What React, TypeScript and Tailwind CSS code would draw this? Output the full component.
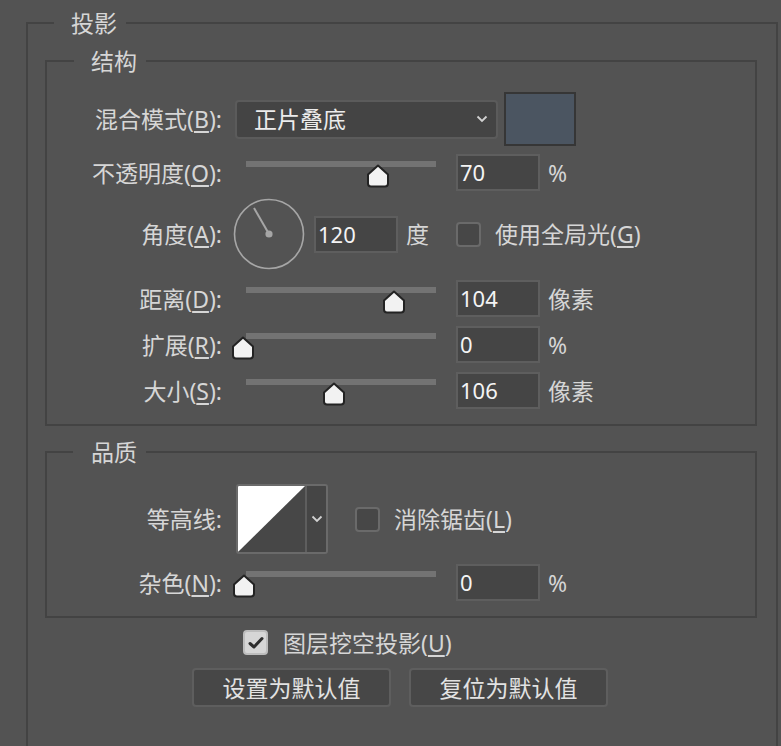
import React from 'react';

const LABEL = 'w-[175px] shrink-0 text-right';

function Mn({ k }: { k: string }) {
  return (
    <>
      (<span className="underline decoration-[1.5px] underline-offset-[3px]">{k}</span>)
    </>
  );
}

function Thumb({ left }: { left: number }) {
  return (
    <svg className="absolute top-[10px]" style={{ left: left - 12 }} width="24" height="24" viewBox="0 0 24 24">
      <path
        d="M12 1.5 L22 10.5 V19.5 Q22 22.5 19 22.5 H5 Q2 22.5 2 19.5 V10.5 Z"
        fill="#f2f2f2"
        stroke="#232323"
        strokeWidth="2"
        strokeLinejoin="round"
      />
    </svg>
  );
}

function Slider({ pos }: { pos: number }) {
  return (
    <div className="relative ml-[24px] h-full w-[190px] shrink-0">
      <div className="absolute inset-x-0 top-[7px] h-[6px] bg-[#737373]" />
      <Thumb left={pos} />
    </div>
  );
}

function NumField({ value, className = '' }: { value: string; className?: string }) {
  return (
    <div
      className={`h-full w-[84px] shrink-0 border-2 border-[#5e5e5e] bg-[#454545] px-[2px] text-[22px] leading-[33px] text-[#f4f4f4] ${className}`}
    >
      {value}
    </div>
  );
}

function SliderRow({ label, pos, value, unit }: { label: React.ReactNode; pos: number; value: string; unit: string }) {
  return (
    <div className="flex h-[37px] items-center">
      <div className={LABEL}>{label}</div>
      <Slider pos={pos} />
      <NumField value={value} className="ml-[20px]" />
      <span className="ml-[8px]">{unit}</span>
    </div>
  );
}

function CheckBox({ checked = false }: { checked?: boolean }) {
  if (checked) {
    return (
      <div className="flex h-[25px] w-[25px] shrink-0 items-center justify-center rounded-[4px] border-2 border-[#bdbdbd] bg-[#d6d6d6]">
        <svg width="16" height="14" viewBox="0 0 16 14">
          <path d="M2 7.5 L6 11 L14 2.5" fill="none" stroke="#2e2e2e" strokeWidth="3" strokeLinecap="round" strokeLinejoin="round" />
        </svg>
      </div>
    );
  }
  return <div className="h-[25px] w-[25px] shrink-0 rounded-[4px] border-2 border-[#6a6a6a] bg-[#474747]" />;
}

function Chevron() {
  return (
    <svg width="12" height="8" viewBox="0 0 12 8">
      <path d="M1.5 1.5 L6 6 L10.5 1.5" fill="none" stroke="#d2d2d2" strokeWidth="1.8" />
    </svg>
  );
}

export default function App() {
  return (
    <div className="h-[746px] w-[781px] overflow-hidden bg-[#535353] pt-[8px] font-['Noto_Sans','Noto_Sans_CJK_SC',sans-serif] text-[23px] leading-[30px] text-[#d6d6d6]">
      <fieldset className="ml-[26px] w-[752px] border-2 border-[#434343] pb-[80px]">
        <legend className="ml-[26px] pl-[17px] pr-[9px] leading-[30px]">投影</legend>

        {/* 结构 */}
        <fieldset className="ml-[17px] mt-[8px] w-[712px] border-2 border-[#434343] pb-[15px]">
          <legend className="ml-[27px] pl-[17px] pr-[9px] leading-[30px]">结构</legend>

          <div className="mt-[16px] flex h-[54px] items-center">
            <div className={LABEL}>
              混合模式<Mn k="B" />:
            </div>
            <div className="ml-[13px] flex h-[39px] w-[263px] items-center justify-between rounded-[4px] border-2 border-[#5b5b5b] bg-[#444444] pl-[17px] pr-[8px] text-[#ececec]">
              <span>正片叠底</span>
              <Chevron />
            </div>
            <div className="ml-[6px] h-[54px] w-[72px] border-2 border-[#363636] bg-[#4b5561]" />
          </div>

          <div className="mt-[8px]">
            <SliderRow label={<>不透明度<Mn k="O" />:</>} pos={132} value="70" unit="%" />
          </div>

          <div className="mt-[7px] flex h-[72px] items-center">
            <div className={LABEL}>
              角度<Mn k="A" />:
            </div>
            <svg className="ml-[11px] shrink-0" width="72" height="72" viewBox="0 0 72 72">
              <circle cx="36" cy="36" r="34.5" fill="none" stroke="#a6a6a6" strokeWidth="1.6" />
              <line x1="36" y1="36" x2="21" y2="10" stroke="#a6a6a6" strokeWidth="2" />
              <circle cx="36" cy="36" r="3.6" fill="#a6a6a6" />
            </svg>
            <div className="ml-[9px] h-[37px]">
              <NumField value="120" className="w-[83px]" />
            </div>
            <span className="ml-[8px] w-[50px] shrink-0">度</span>
            <CheckBox />
            <span className="ml-[14px]">
              使用全局光<Mn k="G" />
            </span>
          </div>

          <div className="mt-[10px]">
            <SliderRow label={<>距离<Mn k="D" />:</>} pos={148} value="104" unit="像素" />
          </div>
          <div className="mt-[9px]">
            <SliderRow label={<>扩展<Mn k="R" />:</>} pos={-3} value="0" unit="%" />
          </div>
          <div className="mt-[9px]">
            <SliderRow label={<>大小<Mn k="S" />:</>} pos={88} value="106" unit="像素" />
          </div>
        </fieldset>

        {/* 品质 */}
        <fieldset className="ml-[17px] mt-[11px] w-[712px] border-2 border-[#434343] pb-[15px]">
          <legend className="ml-[26px] pl-[18px] pr-[9px] leading-[30px]">品质</legend>

          <div className="mt-[17px] flex h-[70px] items-center">
            <div className={LABEL}>等高线:</div>
            <div className="ml-[14px] flex h-[70px] w-[92px] overflow-hidden rounded-[3px] border-2 border-[#6a6a6a]">
              <svg width="67" height="66" viewBox="0 0 67 66" className="shrink-0">
                <rect width="67" height="66" fill="#474747" />
                <polygon points="0,0 67,0 0,66" fill="#ffffff" />
              </svg>
              <div className="flex flex-1 items-center justify-center border-l-2 border-[#5e5e5e] bg-[#454545]">
                <Chevron />
              </div>
            </div>
            <div className="ml-[27px]">
              <CheckBox />
            </div>
            <span className="ml-[14px]">
              消除锯齿<Mn k="L" />
            </span>
          </div>

          <div className="mt-[10px]">
            <SliderRow label={<>杂色<Mn k="N" />:</>} pos={-2} value="0" unit="%" />
          </div>
        </fieldset>

        <div className="ml-[215px] mt-[12px] flex h-[25px] items-center">
          <CheckBox checked />
          <span className="ml-[15px]">
            图层挖空投影<Mn k="U" />
          </span>
        </div>

        <div className="ml-[164px] mt-[13px] flex gap-[18px]">
          <button className="h-[39px] w-[199px] rounded-[4px] border-2 border-[#5e5e5e] bg-[#474747] text-[#e2e2e2]">
            设置为默认值
          </button>
          <button className="h-[39px] w-[199px] rounded-[4px] border-2 border-[#5e5e5e] bg-[#474747] text-[#e2e2e2]">
            复位为默认值
          </button>
        </div>
      </fieldset>
    </div>
  );
}
